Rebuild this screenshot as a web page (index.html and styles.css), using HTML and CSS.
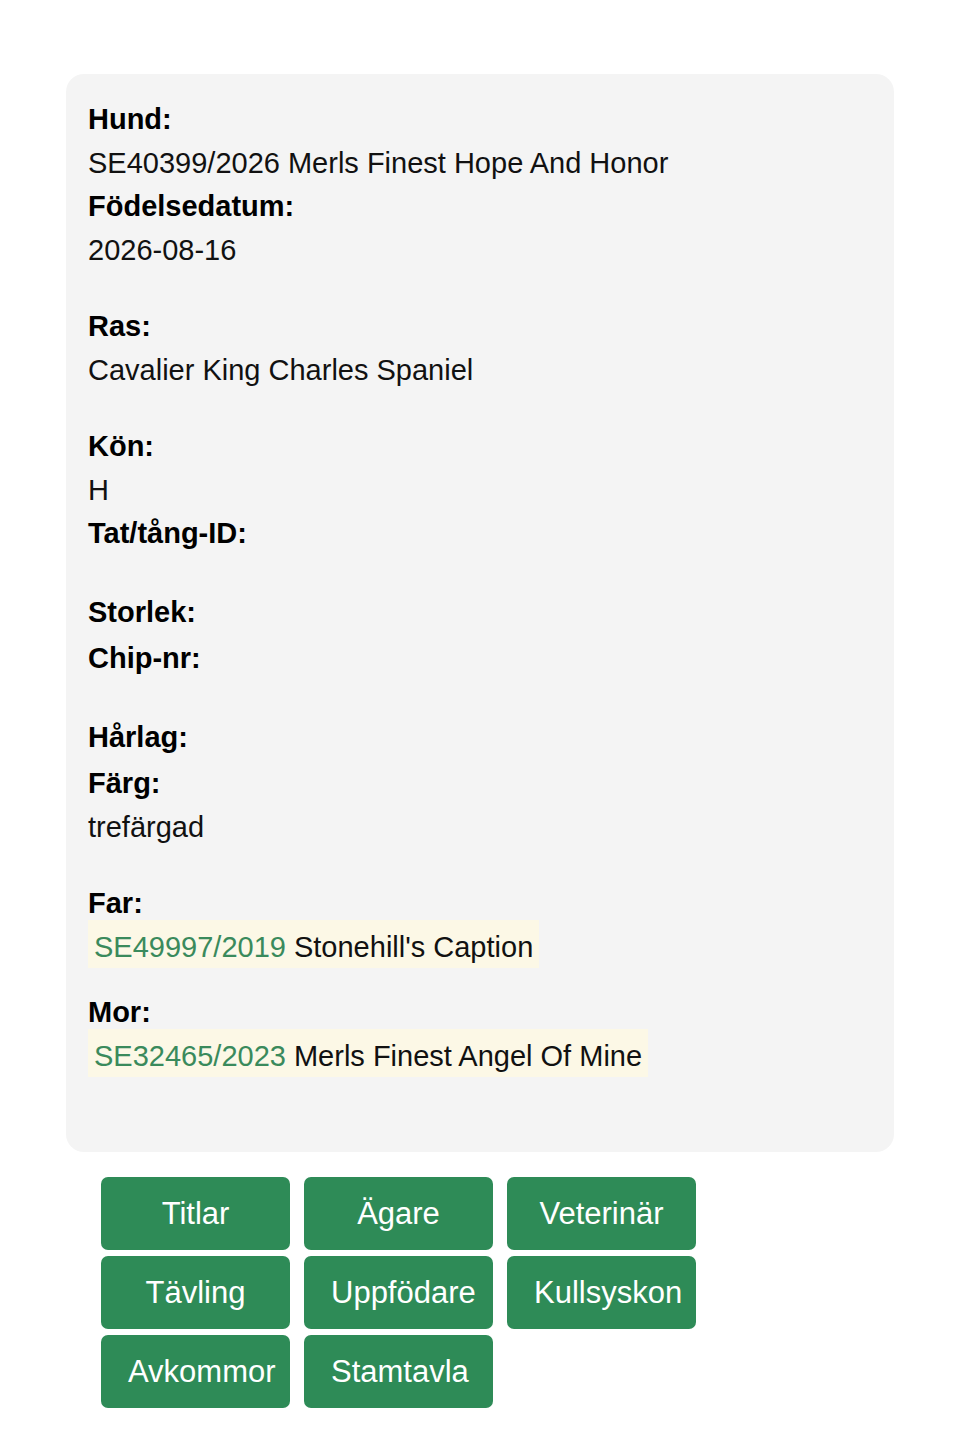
FILE: index.html
```html
<!DOCTYPE html>
<html lang="sv">
<head>
<meta charset="utf-8">
<title>Hund</title>
<link rel="stylesheet" href="styles.css">
</head>
<body>
<div class="page">
  <section class="card">
    <div class="group">
      <div class="label">Hund:</div>
      <div class="value">SE40399/2026 Merls Finest Hope And Honor</div>
      <div class="label">Födelsedatum:</div>
      <div class="value">2026-08-16</div>
    </div>
    <div class="group">
      <div class="label">Ras:</div>
      <div class="value">Cavalier King Charles Spaniel</div>
    </div>
    <div class="group">
      <div class="label">Kön:</div>
      <div class="value">H</div>
      <div class="label">Tat/tång-ID:</div>
      <div class="value"></div>
    </div>
    <div class="group">
      <div class="label">Storlek:</div>
      <div class="value"></div>
      <div class="label">Chip-nr:</div>
      <div class="value"></div>
    </div>
    <div class="group">
      <div class="label">Hårlag:</div>
      <div class="value"></div>
      <div class="label">Färg:</div>
      <div class="value">trefärgad</div>
    </div>
    <div class="group group-parent">
      <div class="label">Far:</div>
      <div class="value"><span class="parent"><span class="regno">SE49997/2019</span> Stonehill's Caption</span></div>
    </div>
    <div class="group group-last">
      <div class="label">Mor:</div>
      <div class="value"><span class="parent"><span class="regno">SE32465/2023</span> Merls Finest Angel Of Mine</span></div>
    </div>
  </section>
  <nav class="actions">
    <a class="btn">Titlar</a>
    <a class="btn">Ägare</a>
    <a class="btn">Veterinär</a>
    <a class="btn">Tävling</a>
    <a class="btn">Uppfödare</a>
    <a class="btn">Kullsyskon</a>
    <a class="btn">Avkommor</a>
    <a class="btn">Stamtavla</a>
  </nav>
</div>
</body>
</html>
```
FILE: styles.css
```css
html, body {
  margin: 0;
  padding: 0;
  background: #ffffff;
}

body {
  font-family: "Liberation Sans", Arial, Helvetica, sans-serif;
  color: #111111;
}

.page {
  padding: 74px 66px 0;
}

.card {
  background: #f4f4f4;
  border-radius: 18px;
  padding: 24px 22px 41px;
  font-size: 29px;
  line-height: 43.5px;
}

.group {
  margin-bottom: 33px;
}

.group-parent {
  margin-bottom: 22px;
}

.label {
  font-weight: bold;
  color: #000000;
}

.value {
  color: #111111;
}

.value:empty {
  height: 2.5px;
}

.parent {
  background: #fcf8e6;
  padding: 11px 6px 5px;
}

.regno {
  color: #3a8a5c;
}

.actions {
  display: grid;
  grid-template-columns: repeat(3, 189px);
  grid-auto-rows: 73px;
  column-gap: 14px;
  row-gap: 6px;
  margin: 25px 0 0 35px;
}

.btn {
  display: block;
  background: #2e8b57;
  color: #ffffff;
  border-radius: 7px;
  padding: 0 27px;
  font-size: 31px;
  line-height: 73px;
  text-align: center;
  white-space: nowrap;
  text-decoration: none;
}
```
